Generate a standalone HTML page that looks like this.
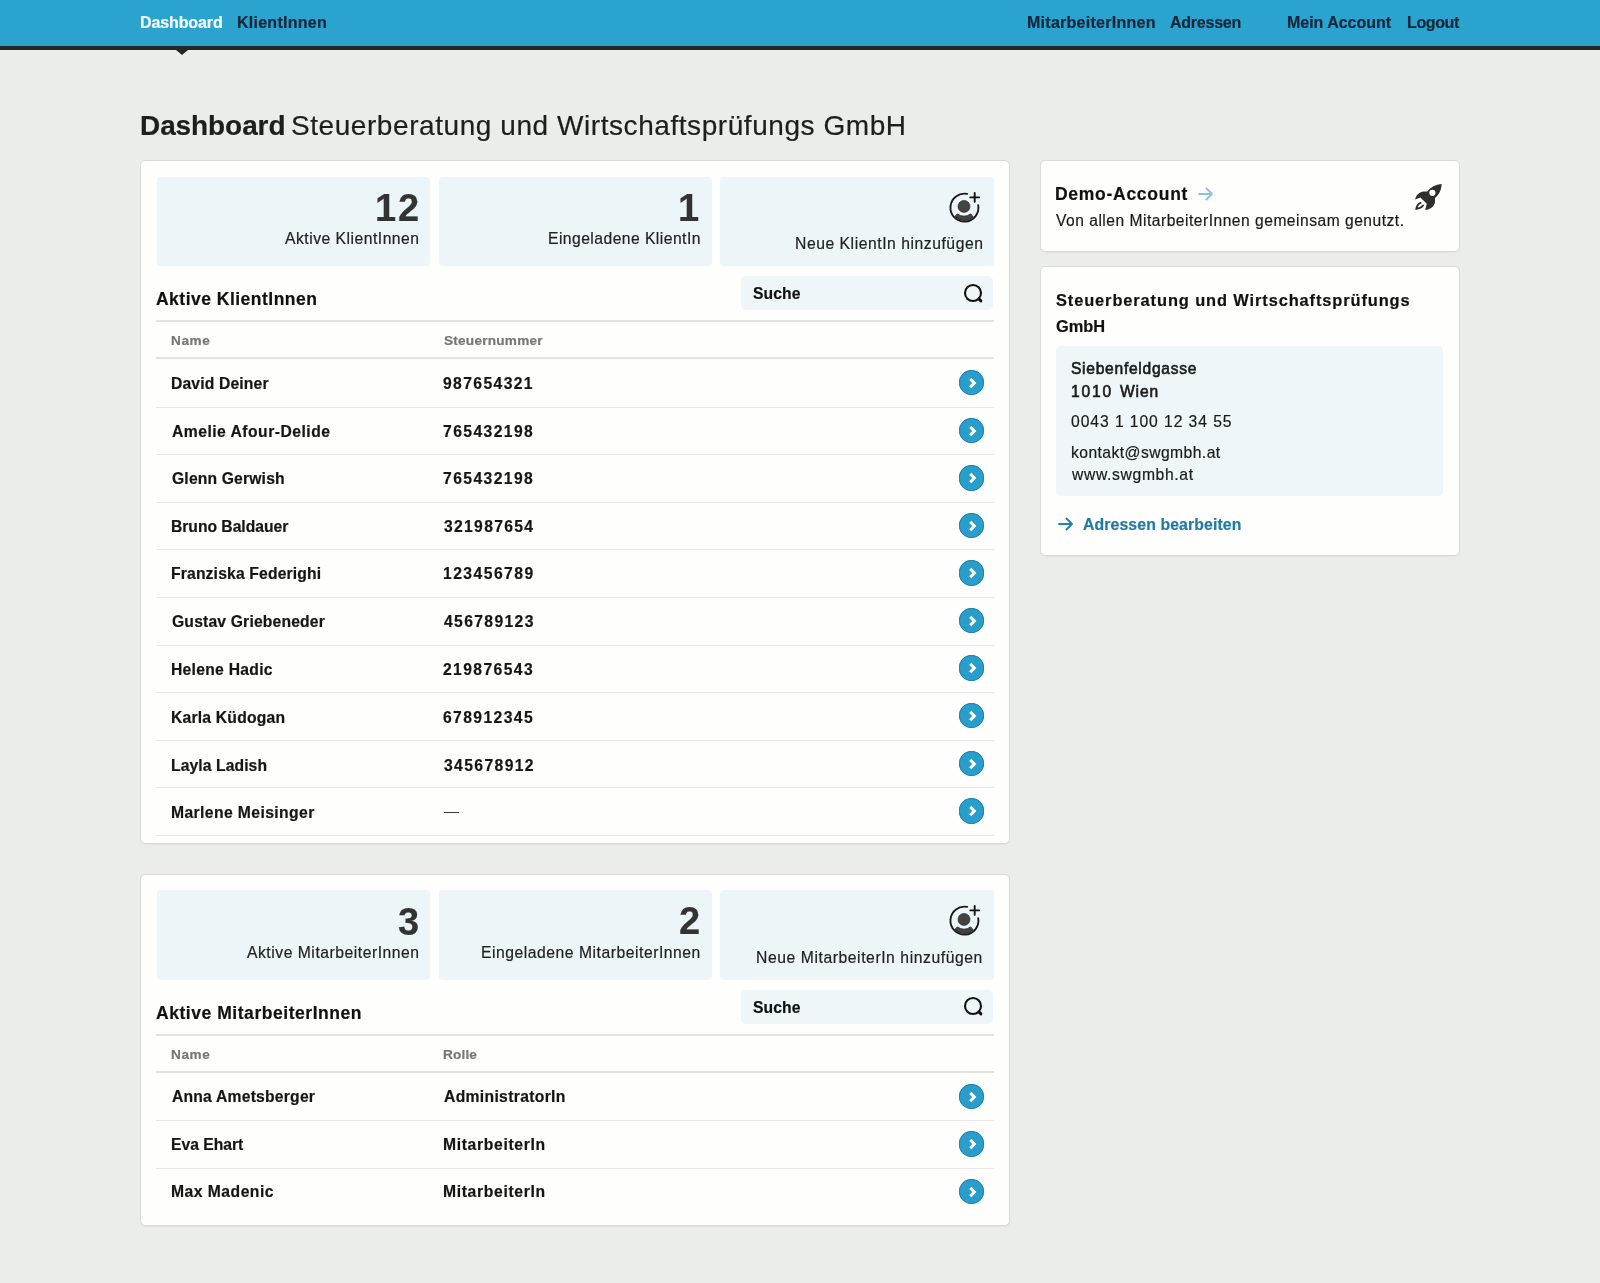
<!DOCTYPE html>
<html><head><meta charset="utf-8"><title>Dashboard</title>
<style>
html,body{margin:0;padding:0;}
body{width:1600px;height:1283px;overflow:hidden;position:relative;background:#eaede9;font-family:"Liberation Sans",sans-serif;}
.t{-webkit-text-stroke:0.2px currentColor;position:absolute;white-space:pre;line-height:1;will-change:transform;font-family:"Liberation Sans",sans-serif;}
</style></head><body>
<div style="position:absolute;left:0px;top:0px;width:1600px;height:46px;background:#2ba3cf;"></div>
<div style="position:absolute;left:0px;top:46px;width:1600px;height:4px;background:#262626;"></div>
<div style="position:absolute;left:175.5px;top:50px;width:0;height:0;border-left:6px solid transparent;border-right:6px solid transparent;border-top:5px solid #262626;"></div>
<div style="position:absolute;left:140px;top:160px;width:870px;height:684px;background:#fefefd;border:1px solid #dadbd7;border-radius:5px;box-sizing:border-box;box-shadow:0 1px 1px rgba(0,0,0,0.04);"></div>
<div style="position:absolute;left:140px;top:873.5px;width:870px;height:352px;background:#fefefd;border:1px solid #dadbd7;border-radius:5px;box-sizing:border-box;box-shadow:0 1px 1px rgba(0,0,0,0.04);"></div>
<div style="position:absolute;left:1040px;top:160px;width:420px;height:91.5px;background:#fefefd;border:1px solid #dadbd7;border-radius:5px;box-sizing:border-box;box-shadow:0 1px 1px rgba(0,0,0,0.04);"></div>
<div style="position:absolute;left:1040px;top:266px;width:420px;height:290px;background:#fefefd;border:1px solid #dadbd7;border-radius:5px;box-sizing:border-box;box-shadow:0 1px 1px rgba(0,0,0,0.04);"></div>
<div style="position:absolute;left:157px;top:176.5px;width:273px;height:88.5px;background:#ecf6f9;border-radius:4px;box-shadow:0 1px 1px rgba(0,40,60,0.05);"></div>
<div style="position:absolute;left:438.8px;top:176.5px;width:273px;height:88.5px;background:#ecf6f9;border-radius:4px;box-shadow:0 1px 1px rgba(0,40,60,0.05);"></div>
<div style="position:absolute;left:720px;top:176.5px;width:273.5px;height:88.5px;background:#ecf6f9;border-radius:4px;box-shadow:0 1px 1px rgba(0,40,60,0.05);"></div>
<div style="position:absolute;left:741px;top:276px;width:252px;height:34px;background:#eef6f9;border-radius:5px;"></div>
<svg width="22" height="22" viewBox="0 0 22 22" style="position:absolute;left:963px;top:282.8px"><circle cx="10" cy="10" r="8" fill="none" stroke="#111" stroke-width="2.1"/><path d="M15.9 15.9 L17.9 17.9" stroke="#111" stroke-width="2.9" stroke-linecap="round"/></svg>
<svg width="34" height="34" viewBox="0 0 34 34" style="position:absolute;left:947.2px;top:190.5px">
<path d="M20.2 2.9 A14 14 0 1 0 31.2 14.1" fill="none" stroke="#1a1a1a" stroke-width="1.9" stroke-linecap="round"/>
<path d="M23.3 6.4 h8.8 M27.7 2 v8.8" stroke="#111" stroke-width="1.9" stroke-linecap="round"/>
<circle cx="17" cy="15.4" r="6" fill="#434343" stroke="#1f1f1f" stroke-width="0.6"/>
<path d="M7.9 25.4 L10.3 22.9 Q17 27.5 23.7 22.9 L26.3 26.1 A13.2 13.2 0 0 1 7.9 25.4 Z" fill="#434343" stroke="#1f1f1f" stroke-width="0.8" stroke-linejoin="round"/>
</svg>
<div style="position:absolute;left:156px;top:320px;width:838px;height:2px;background:#e3e3de;"></div>
<div style="position:absolute;left:156px;top:357px;width:838px;height:2px;background:#e3e3de;"></div>
<div style="position:absolute;left:156px;top:406.8px;width:838px;height:1px;background:#e8e8e6;"></div>
<div style="position:absolute;left:958.5999999999999px;top:370.1px;width:25.4px;height:25.4px;border-radius:50%;background:#2a9ecb;box-shadow:inset 0 0 0 1px #2284b0;"><svg width="26" height="26" viewBox="0 0 26 26" style="position:absolute;left:0;top:0"><path d="M11.2 8.9 L15.3 13 L11.2 17.3" fill="none" stroke="#fff" stroke-width="3" stroke-linecap="butt" stroke-linejoin="miter"/></svg></div>
<div style="position:absolute;left:156px;top:454.36px;width:838px;height:1px;background:#e8e8e6;"></div>
<div style="position:absolute;left:958.5999999999999px;top:417.66px;width:25.4px;height:25.4px;border-radius:50%;background:#2a9ecb;box-shadow:inset 0 0 0 1px #2284b0;"><svg width="26" height="26" viewBox="0 0 26 26" style="position:absolute;left:0;top:0"><path d="M11.2 8.9 L15.3 13 L11.2 17.3" fill="none" stroke="#fff" stroke-width="3" stroke-linecap="butt" stroke-linejoin="miter"/></svg></div>
<div style="position:absolute;left:156px;top:501.92px;width:838px;height:1px;background:#e8e8e6;"></div>
<div style="position:absolute;left:958.5999999999999px;top:465.22px;width:25.4px;height:25.4px;border-radius:50%;background:#2a9ecb;box-shadow:inset 0 0 0 1px #2284b0;"><svg width="26" height="26" viewBox="0 0 26 26" style="position:absolute;left:0;top:0"><path d="M11.2 8.9 L15.3 13 L11.2 17.3" fill="none" stroke="#fff" stroke-width="3" stroke-linecap="butt" stroke-linejoin="miter"/></svg></div>
<div style="position:absolute;left:156px;top:549.48px;width:838px;height:1px;background:#e8e8e6;"></div>
<div style="position:absolute;left:958.5999999999999px;top:512.78px;width:25.4px;height:25.4px;border-radius:50%;background:#2a9ecb;box-shadow:inset 0 0 0 1px #2284b0;"><svg width="26" height="26" viewBox="0 0 26 26" style="position:absolute;left:0;top:0"><path d="M11.2 8.9 L15.3 13 L11.2 17.3" fill="none" stroke="#fff" stroke-width="3" stroke-linecap="butt" stroke-linejoin="miter"/></svg></div>
<div style="position:absolute;left:156px;top:597.04px;width:838px;height:1px;background:#e8e8e6;"></div>
<div style="position:absolute;left:958.5999999999999px;top:560.3399999999999px;width:25.4px;height:25.4px;border-radius:50%;background:#2a9ecb;box-shadow:inset 0 0 0 1px #2284b0;"><svg width="26" height="26" viewBox="0 0 26 26" style="position:absolute;left:0;top:0"><path d="M11.2 8.9 L15.3 13 L11.2 17.3" fill="none" stroke="#fff" stroke-width="3" stroke-linecap="butt" stroke-linejoin="miter"/></svg></div>
<div style="position:absolute;left:156px;top:644.6px;width:838px;height:1px;background:#e8e8e6;"></div>
<div style="position:absolute;left:958.5999999999999px;top:607.9px;width:25.4px;height:25.4px;border-radius:50%;background:#2a9ecb;box-shadow:inset 0 0 0 1px #2284b0;"><svg width="26" height="26" viewBox="0 0 26 26" style="position:absolute;left:0;top:0"><path d="M11.2 8.9 L15.3 13 L11.2 17.3" fill="none" stroke="#fff" stroke-width="3" stroke-linecap="butt" stroke-linejoin="miter"/></svg></div>
<div style="position:absolute;left:156px;top:692.1600000000001px;width:838px;height:1px;background:#e8e8e6;"></div>
<div style="position:absolute;left:958.5999999999999px;top:655.46px;width:25.4px;height:25.4px;border-radius:50%;background:#2a9ecb;box-shadow:inset 0 0 0 1px #2284b0;"><svg width="26" height="26" viewBox="0 0 26 26" style="position:absolute;left:0;top:0"><path d="M11.2 8.9 L15.3 13 L11.2 17.3" fill="none" stroke="#fff" stroke-width="3" stroke-linecap="butt" stroke-linejoin="miter"/></svg></div>
<div style="position:absolute;left:156px;top:739.72px;width:838px;height:1px;background:#e8e8e6;"></div>
<div style="position:absolute;left:958.5999999999999px;top:703.02px;width:25.4px;height:25.4px;border-radius:50%;background:#2a9ecb;box-shadow:inset 0 0 0 1px #2284b0;"><svg width="26" height="26" viewBox="0 0 26 26" style="position:absolute;left:0;top:0"><path d="M11.2 8.9 L15.3 13 L11.2 17.3" fill="none" stroke="#fff" stroke-width="3" stroke-linecap="butt" stroke-linejoin="miter"/></svg></div>
<div style="position:absolute;left:156px;top:787.28px;width:838px;height:1px;background:#e8e8e6;"></div>
<div style="position:absolute;left:958.5999999999999px;top:750.5799999999999px;width:25.4px;height:25.4px;border-radius:50%;background:#2a9ecb;box-shadow:inset 0 0 0 1px #2284b0;"><svg width="26" height="26" viewBox="0 0 26 26" style="position:absolute;left:0;top:0"><path d="M11.2 8.9 L15.3 13 L11.2 17.3" fill="none" stroke="#fff" stroke-width="3" stroke-linecap="butt" stroke-linejoin="miter"/></svg></div>
<div style="position:absolute;left:156px;top:834.84px;width:838px;height:1px;background:#e8e8e6;"></div>
<div style="position:absolute;left:958.5999999999999px;top:798.14px;width:25.4px;height:25.4px;border-radius:50%;background:#2a9ecb;box-shadow:inset 0 0 0 1px #2284b0;"><svg width="26" height="26" viewBox="0 0 26 26" style="position:absolute;left:0;top:0"><path d="M11.2 8.9 L15.3 13 L11.2 17.3" fill="none" stroke="#fff" stroke-width="3" stroke-linecap="butt" stroke-linejoin="miter"/></svg></div>
<div style="position:absolute;left:443.5px;top:811.6px;width:15.5px;height:1.5px;background:#3a3a3a;"></div>
<div style="position:absolute;left:157px;top:890.1px;width:273px;height:88.5px;background:#ecf6f9;border-radius:4px;box-shadow:0 1px 1px rgba(0,40,60,0.05);"></div>
<div style="position:absolute;left:438.8px;top:890.1px;width:273px;height:88.5px;background:#ecf6f9;border-radius:4px;box-shadow:0 1px 1px rgba(0,40,60,0.05);"></div>
<div style="position:absolute;left:720px;top:890.1px;width:273.5px;height:88.5px;background:#ecf6f9;border-radius:4px;box-shadow:0 1px 1px rgba(0,40,60,0.05);"></div>
<div style="position:absolute;left:741px;top:989.6px;width:252px;height:34px;background:#eef6f9;border-radius:5px;"></div>
<svg width="22" height="22" viewBox="0 0 22 22" style="position:absolute;left:963px;top:996.4000000000001px"><circle cx="10" cy="10" r="8" fill="none" stroke="#111" stroke-width="2.1"/><path d="M15.9 15.9 L17.9 17.9" stroke="#111" stroke-width="2.9" stroke-linecap="round"/></svg>
<svg width="34" height="34" viewBox="0 0 34 34" style="position:absolute;left:947.2px;top:904.1px">
<path d="M20.2 2.9 A14 14 0 1 0 31.2 14.1" fill="none" stroke="#1a1a1a" stroke-width="1.9" stroke-linecap="round"/>
<path d="M23.3 6.4 h8.8 M27.7 2 v8.8" stroke="#111" stroke-width="1.9" stroke-linecap="round"/>
<circle cx="17" cy="15.4" r="6" fill="#434343" stroke="#1f1f1f" stroke-width="0.6"/>
<path d="M7.9 25.4 L10.3 22.9 Q17 27.5 23.7 22.9 L26.3 26.1 A13.2 13.2 0 0 1 7.9 25.4 Z" fill="#434343" stroke="#1f1f1f" stroke-width="0.8" stroke-linejoin="round"/>
</svg>
<div style="position:absolute;left:156px;top:1033.6px;width:838px;height:2px;background:#e3e3de;"></div>
<div style="position:absolute;left:156px;top:1070.6px;width:838px;height:2px;background:#e3e3de;"></div>
<div style="position:absolute;left:156px;top:1120.4px;width:838px;height:1px;background:#e8e8e6;"></div>
<div style="position:absolute;left:958.5999999999999px;top:1083.7px;width:25.4px;height:25.4px;border-radius:50%;background:#2a9ecb;box-shadow:inset 0 0 0 1px #2284b0;"><svg width="26" height="26" viewBox="0 0 26 26" style="position:absolute;left:0;top:0"><path d="M11.2 8.9 L15.3 13 L11.2 17.3" fill="none" stroke="#fff" stroke-width="3" stroke-linecap="butt" stroke-linejoin="miter"/></svg></div>
<div style="position:absolute;left:156px;top:1167.96px;width:838px;height:1px;background:#e8e8e6;"></div>
<div style="position:absolute;left:958.5999999999999px;top:1131.26px;width:25.4px;height:25.4px;border-radius:50%;background:#2a9ecb;box-shadow:inset 0 0 0 1px #2284b0;"><svg width="26" height="26" viewBox="0 0 26 26" style="position:absolute;left:0;top:0"><path d="M11.2 8.9 L15.3 13 L11.2 17.3" fill="none" stroke="#fff" stroke-width="3" stroke-linecap="butt" stroke-linejoin="miter"/></svg></div>
<div style="position:absolute;left:958.5999999999999px;top:1178.82px;width:25.4px;height:25.4px;border-radius:50%;background:#2a9ecb;box-shadow:inset 0 0 0 1px #2284b0;"><svg width="26" height="26" viewBox="0 0 26 26" style="position:absolute;left:0;top:0"><path d="M11.2 8.9 L15.3 13 L11.2 17.3" fill="none" stroke="#fff" stroke-width="3" stroke-linecap="butt" stroke-linejoin="miter"/></svg></div>
<svg width="16" height="14" viewBox="0 0 16 14" style="position:absolute;left:1198px;top:186.75px"><path d="M1 7 H14 M8.5 1.5 L14 7 L8.5 12.5" fill="none" stroke="#8dc3da" stroke-width="1.8" stroke-linecap="round" stroke-linejoin="round"/></svg>
<svg width="30" height="30" viewBox="0 0 30 30" style="position:absolute;left:1414px;top:181.5px">
<path d="M27.6 1.9 C27.5 8 25 12.5 21 16 L21 20 C20.5 24.5 16 27.8 11.2 28 L12.8 21.8 L6.4 15.4 L1.1 17.4 C1.8 13 5.8 9.6 9.6 9.4 L13.2 9.4 C16.8 5 21.5 2.5 27.6 1.9 Z" fill="#2e2e2e"/>
<circle cx="18.4" cy="10.8" r="3.1" fill="#fefefd"/>
<path d="M6.6 20.9 C4.3 21.9 2.8 23.9 2.3 26.8 C5.3 26.5 7.6 25.4 9.1 23.5" fill="none" stroke="#2e2e2e" stroke-width="1.8" stroke-linecap="round"/>
</svg>
<div style="position:absolute;left:1056px;top:346.25px;width:386.5px;height:150px;background:#eef6f9;border-radius:5px;"></div>
<svg width="16" height="14" viewBox="0 0 16 14" style="position:absolute;left:1058px;top:517.4px"><path d="M1 7 H14 M8.5 1.5 L14 7 L8.5 12.5" fill="none" stroke="#2382aa" stroke-width="2" stroke-linecap="round" stroke-linejoin="round"/></svg>
<div class="t" style="top:14.65px;font-size:16px;font-weight:700;color:#f4fbff;letter-spacing:-0.107px;left:140.23px;">Dashboard</div>
<div class="t" style="top:14.95px;font-size:16px;font-weight:700;color:#13263a;letter-spacing:0.255px;left:237.33px;">KlientInnen</div>
<div class="t" style="top:15.25px;font-size:16px;font-weight:700;color:#13263a;letter-spacing:0.266px;left:1026.83px;">MitarbeiterInnen</div>
<div class="t" style="top:15.25px;font-size:16px;font-weight:700;color:#13263a;letter-spacing:-0.233px;left:1170.20px;">Adressen</div>
<div class="t" style="top:15.35px;font-size:16px;font-weight:700;color:#13263a;letter-spacing:-0.030px;left:1287.23px;">Mein Account</div>
<div class="t" style="top:15.35px;font-size:16px;font-weight:700;color:#13263a;letter-spacing:-0.388px;left:1406.63px;">Logout</div>
<div class="t" style="top:111.99px;font-size:28px;font-weight:700;color:#1e1e1e;letter-spacing:-0.091px;left:140.03px;">Dashboard</div>
<div class="t" style="top:111.99px;font-size:28px;font-weight:400;color:#1e1e1e;letter-spacing:0.563px;left:291.23px;">Steuerberatung und Wirtschaftsprüfungs GmbH</div>
<div class="t" style="top:189.43px;font-size:38px;font-weight:700;color:#333333;letter-spacing:1.934px;right:1179.24px;">12</div>
<div class="t" style="top:231.21px;font-size:15.7px;font-weight:400;color:#222222;letter-spacing:0.498px;right:1180.58px;">Aktive KlientInnen</div>
<div class="t" style="top:189.23px;font-size:38px;font-weight:700;color:#333333;letter-spacing:0.000px;right:900.44px;">1</div>
<div class="t" style="top:231.31px;font-size:15.7px;font-weight:400;color:#222222;letter-spacing:0.447px;right:898.83px;">Eingeladene KlientIn</div>
<div class="t" style="top:236.41px;font-size:15.7px;font-weight:400;color:#222222;letter-spacing:0.548px;right:616.83px;">Neue KlientIn hinzufügen</div>
<div class="t" style="top:286.01px;font-size:15.7px;font-weight:700;color:#111111;letter-spacing:0.078px;left:753.15px;">Suche</div>
<div class="t" style="top:291.18px;font-size:17.5px;font-weight:700;color:#111111;letter-spacing:0.485px;left:156.46px;">Aktive KlientInnen</div>
<div class="t" style="top:334.19px;font-size:13.6px;font-weight:700;color:#777777;letter-spacing:0.614px;left:171.39px;">Name</div>
<div class="t" style="top:334.09px;font-size:13.6px;font-weight:700;color:#777777;letter-spacing:0.240px;left:443.61px;">Steuernummer</div>
<div class="t" style="top:376.01px;font-size:15.7px;font-weight:700;color:#151515;letter-spacing:0.144px;left:171.25px;">David Deiner</div>
<div class="t" style="top:376.01px;font-size:15.7px;font-weight:700;color:#151515;letter-spacing:1.381px;left:443.46px;">987654321</div>
<div class="t" style="top:423.71px;font-size:15.7px;font-weight:700;color:#151515;letter-spacing:0.476px;left:171.91px;">Amelie Afour-Delide</div>
<div class="t" style="top:423.71px;font-size:15.7px;font-weight:700;color:#151515;letter-spacing:1.403px;left:443.33px;">765432198</div>
<div class="t" style="top:471.41px;font-size:15.7px;font-weight:700;color:#151515;letter-spacing:0.158px;left:171.66px;">Glenn Gerwish</div>
<div class="t" style="top:471.41px;font-size:15.7px;font-weight:700;color:#151515;letter-spacing:1.403px;left:443.33px;">765432198</div>
<div class="t" style="top:519.01px;font-size:15.7px;font-weight:700;color:#151515;letter-spacing:-0.030px;left:171.25px;">Bruno Baldauer</div>
<div class="t" style="top:519.01px;font-size:15.7px;font-weight:700;color:#151515;letter-spacing:1.314px;left:443.64px;">321987654</div>
<div class="t" style="top:566.31px;font-size:15.7px;font-weight:700;color:#151515;letter-spacing:0.157px;left:171.25px;">Franziska Federighi</div>
<div class="t" style="top:566.31px;font-size:15.7px;font-weight:700;color:#151515;letter-spacing:1.455px;left:443.01px;">123456789</div>
<div class="t" style="top:613.81px;font-size:15.7px;font-weight:700;color:#151515;letter-spacing:0.171px;left:171.66px;">Gustav Griebeneder</div>
<div class="t" style="top:613.81px;font-size:15.7px;font-weight:700;color:#151515;letter-spacing:1.359px;left:443.76px;">456789123</div>
<div class="t" style="top:661.81px;font-size:15.7px;font-weight:700;color:#151515;letter-spacing:0.271px;left:171.25px;">Helene Hadic</div>
<div class="t" style="top:661.81px;font-size:15.7px;font-weight:700;color:#151515;letter-spacing:1.398px;left:443.46px;">219876543</div>
<div class="t" style="top:709.91px;font-size:15.7px;font-weight:700;color:#151515;letter-spacing:0.204px;left:171.25px;">Karla Küdogan</div>
<div class="t" style="top:709.91px;font-size:15.7px;font-weight:700;color:#151515;letter-spacing:1.385px;left:443.43px;">678912345</div>
<div class="t" style="top:757.51px;font-size:15.7px;font-weight:700;color:#151515;letter-spacing:0.090px;left:171.25px;">Layla Ladish</div>
<div class="t" style="top:757.51px;font-size:15.7px;font-weight:700;color:#151515;letter-spacing:1.382px;left:443.64px;">345678912</div>
<div class="t" style="top:805.21px;font-size:15.7px;font-weight:700;color:#151515;letter-spacing:0.401px;left:171.25px;">Marlene Meisinger</div>
<div class="t" style="top:902.53px;font-size:38px;font-weight:700;color:#333333;letter-spacing:0.000px;right:1181.33px;">3</div>
<div class="t" style="top:944.81px;font-size:15.7px;font-weight:400;color:#222222;letter-spacing:0.528px;right:1180.55px;">Aktive MitarbeiterInnen</div>
<div class="t" style="top:902.33px;font-size:38px;font-weight:700;color:#333333;letter-spacing:0.000px;right:899.98px;">2</div>
<div class="t" style="top:944.91px;font-size:15.7px;font-weight:400;color:#222222;letter-spacing:0.532px;right:898.75px;">Eingeladene MitarbeiterInnen</div>
<div class="t" style="top:950.01px;font-size:15.7px;font-weight:400;color:#222222;letter-spacing:0.576px;right:616.80px;">Neue MitarbeiterIn hinzufügen</div>
<div class="t" style="top:999.61px;font-size:15.7px;font-weight:700;color:#111111;letter-spacing:0.078px;left:753.15px;">Suche</div>
<div class="t" style="top:1004.78px;font-size:17.5px;font-weight:700;color:#111111;letter-spacing:0.545px;left:156.46px;">Aktive MitarbeiterInnen</div>
<div class="t" style="top:1047.79px;font-size:13.6px;font-weight:700;color:#777777;letter-spacing:0.614px;left:171.39px;">Name</div>
<div class="t" style="top:1047.69px;font-size:13.6px;font-weight:700;color:#777777;letter-spacing:0.160px;left:443.09px;">Rolle</div>
<div class="t" style="top:1089.21px;font-size:15.7px;font-weight:700;color:#151515;letter-spacing:0.210px;left:171.91px;">Anna Ametsberger</div>
<div class="t" style="top:1089.21px;font-size:15.7px;font-weight:700;color:#151515;letter-spacing:0.326px;left:443.61px;">AdministratorIn</div>
<div class="t" style="top:1136.61px;font-size:15.7px;font-weight:700;color:#151515;letter-spacing:-0.017px;left:171.25px;">Eva Ehart</div>
<div class="t" style="top:1136.61px;font-size:15.7px;font-weight:700;color:#151515;letter-spacing:0.657px;left:442.95px;">MitarbeiterIn</div>
<div class="t" style="top:1184.31px;font-size:15.7px;font-weight:700;color:#151515;letter-spacing:0.485px;left:171.25px;">Max Madenic</div>
<div class="t" style="top:1184.31px;font-size:15.7px;font-weight:700;color:#151515;letter-spacing:0.657px;left:442.95px;">MitarbeiterIn</div>
<div class="t" style="top:185.63px;font-size:17.5px;font-weight:700;color:#111111;letter-spacing:0.721px;left:1055.33px;">Demo-Account</div>
<div class="t" style="top:213.49px;font-size:15.6px;font-weight:400;color:#1b1b1b;letter-spacing:0.501px;left:1056.43px;">Von allen MitarbeiterInnen gemeinsam genutzt.</div>
<div class="t" style="top:291.56px;font-size:16.4px;font-weight:700;color:#111111;letter-spacing:0.898px;left:1056.03px;">Steuerberatung und Wirtschaftsprüfungs</div>
<div class="t" style="top:318.31px;font-size:16.4px;font-weight:700;color:#111111;letter-spacing:0.000px;left:1055.83px;">GmbH</div>
<div class="t" style="top:361.49px;font-size:15.6px;font-weight:400;color:#1b1b1b;letter-spacing:0.721px;-webkit-text-stroke:0.6px #1b1b1b;left:1071.19px;">Siebenfeldgasse</div>
<div class="t" style="top:383.99px;font-size:15.6px;font-weight:400;color:#1b1b1b;letter-spacing:1.865px;-webkit-text-stroke:0.6px #1b1b1b;left:1070.71px;">1010</div>
<div class="t" style="top:383.99px;font-size:15.6px;font-weight:400;color:#1b1b1b;letter-spacing:0.850px;-webkit-text-stroke:0.6px #1b1b1b;left:1120.13px;">Wien</div>
<div class="t" style="top:414.31px;font-size:15.7px;font-weight:400;color:#1b1b1b;letter-spacing:0.924px;left:1071.29px;">0043 1 100 12 34 55</div>
<div class="t" style="top:444.91px;font-size:15.7px;font-weight:400;color:#1b1b1b;letter-spacing:0.425px;left:1070.84px;">kontakt@swgmbh.at</div>
<div class="t" style="top:467.16px;font-size:15.7px;font-weight:400;color:#1b1b1b;letter-spacing:0.646px;left:1071.92px;">www.swgmbh.at</div>
<div class="t" style="top:516.92px;font-size:15.8px;font-weight:700;color:#1f7aa4;letter-spacing:0.116px;left:1083.36px;">Adressen bearbeiten</div>
</body></html>
